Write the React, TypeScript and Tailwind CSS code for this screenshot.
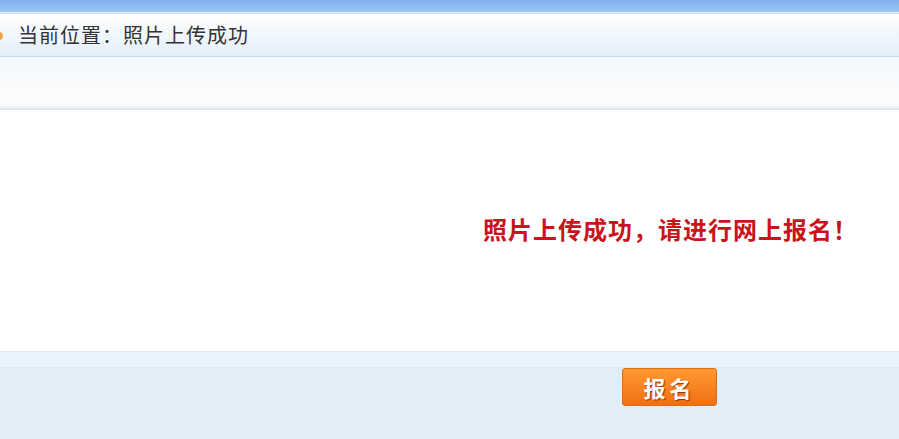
const cjk = { fontFamily: '"SimSun", "Noto Sans CJK SC", sans-serif' }

export default function App() {
  return (
    <div className="w-[899px] h-[439px] overflow-hidden bg-white" style={cjk}>
      {/* top blue band */}
      <div className="h-[12px] bg-gradient-to-b from-[#7fb2ec] to-[#9cc6f4]" />
      <div className="h-[1px] bg-[#e8f2fc]" />
      <div className="h-[1px] bg-[#c4d9ee]" />

      {/* breadcrumb */}
      <div className="relative h-[43px] flex items-center bg-gradient-to-b from-[#ffffff] to-[#e3eef9] border-b border-[#c9dbec]">
        <span className="absolute left-[-5px] top-[18px] w-[8px] h-[8px] rounded-full bg-[#f2a54a]" />
        <span className="pl-[18px] text-[20px] leading-none text-[#333333] tracking-[1px]">当前位置：照片上传成功</span>
      </div>

      {/* toolbar strip */}
      <div className="h-[49px] bg-gradient-to-b from-[#f4f9fe] to-[#fdfcfb]" />
      <div className="h-[2px] bg-[#eef3f6]" />
      <div className="h-[2px] bg-[#dde9f4]" />

      {/* message */}
      <div className="h-[241px] flex items-center pl-[483px] pb-[4px]">
        <span className="text-[24px] leading-none font-bold text-[#c8141a] tracking-[1px]">照片上传成功，请进行网上报名！</span>
      </div>

      {/* bottom */}
      <div className="h-[1px] bg-[#dde8f1]" />
      <div className="h-[15px] bg-[#e8f4fd]" />
      <div className="h-[1px] bg-[#dfeaf5]" />
      <div className="h-[73px] bg-[#e3edf8] pl-[622px]">
        <button className="w-[95px] h-[38px] rounded-[3px] border border-[#de6a14] bg-gradient-to-b from-[#ff9a32] to-[#f06e10] text-white font-bold text-[22px] leading-none tracking-[4px] [text-shadow:1px_1px_1px_#8a3a00]">
          报名
        </button>
      </div>
    </div>
  )
}
